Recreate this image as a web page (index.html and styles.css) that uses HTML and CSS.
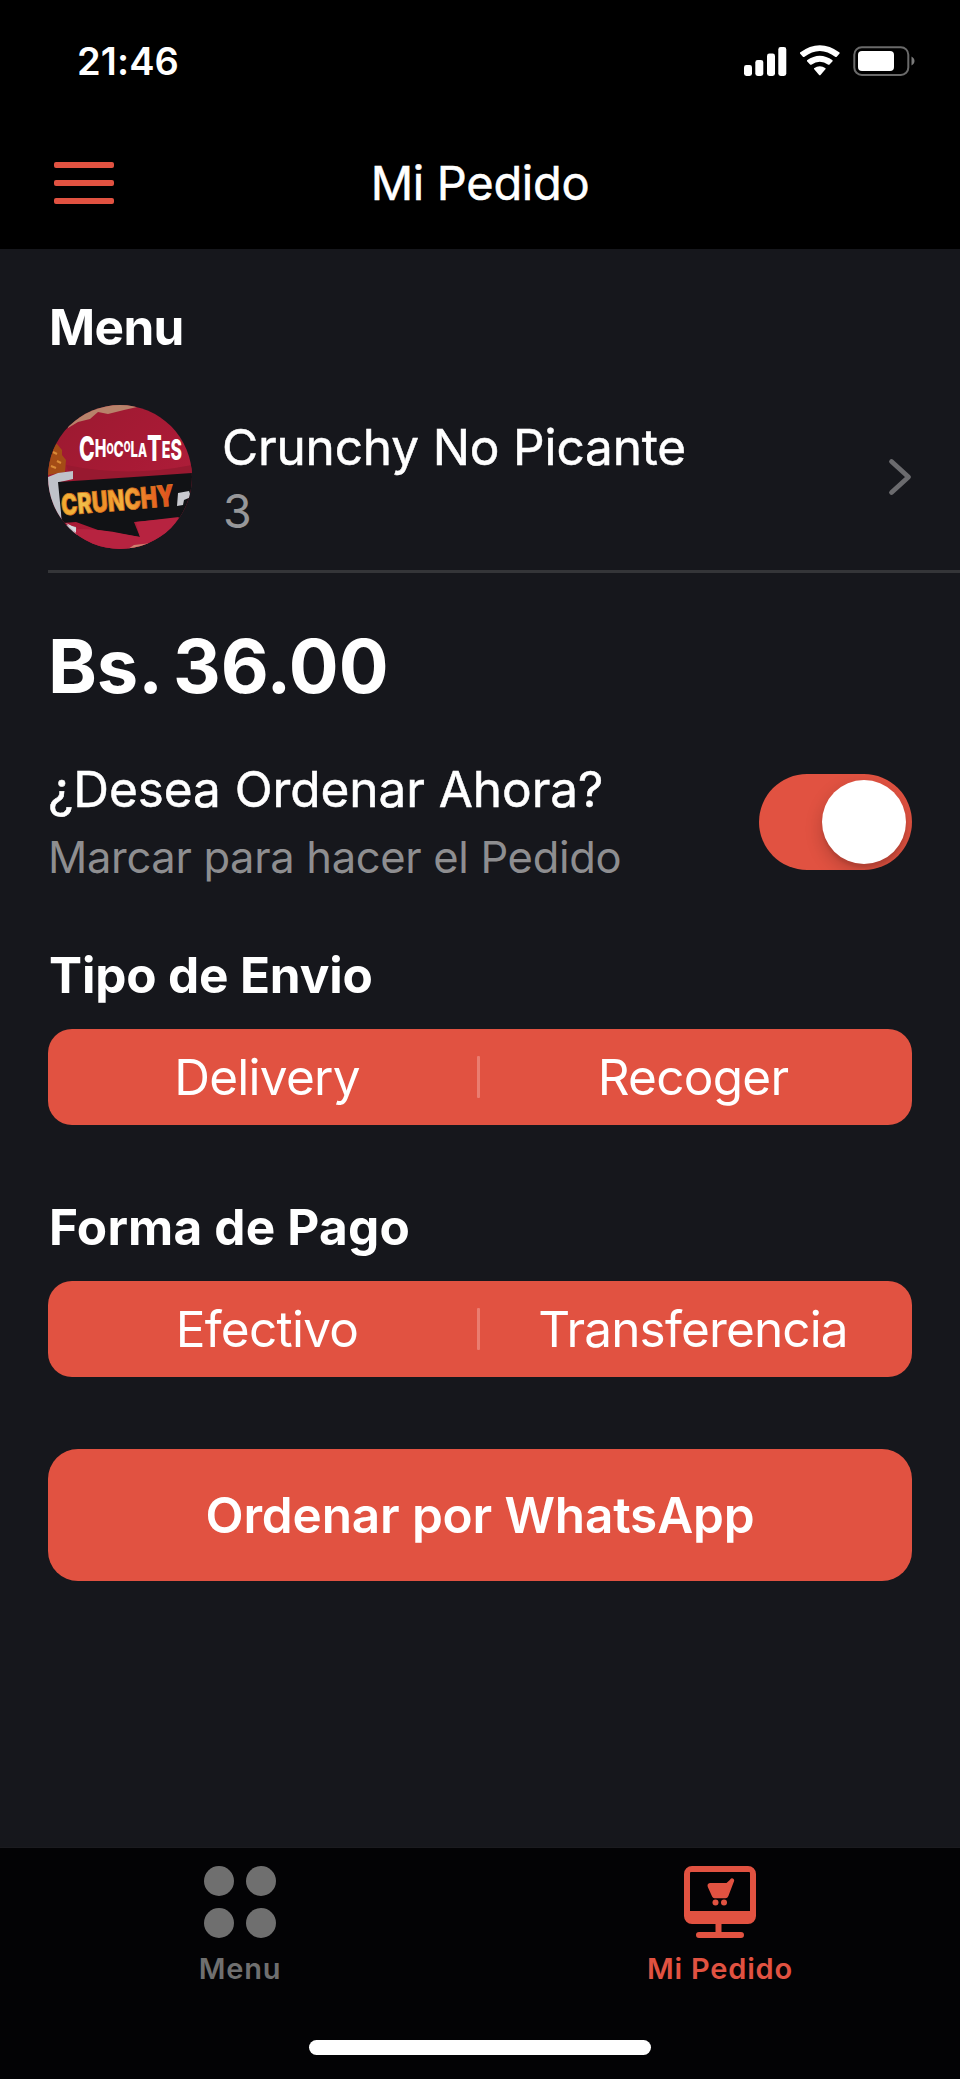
FILE: index.html
```html
<!DOCTYPE html>
<html lang="es">
<head>
<meta charset="utf-8">
<title>Mi Pedido</title>
<link rel="stylesheet" href="styles.css">
</head>
<body>
<div class="screen">
  <header class="top">
    <div class="status">
      <span class="time">21:46</span>
      <svg class="status-icons" viewBox="0 0 174 34" width="174" height="34">
        <g fill="#fff">
          <rect x="0" y="21" width="8" height="11" rx="2.4"/>
          <rect x="11.3" y="16" width="8" height="16" rx="2.4"/>
          <rect x="23" y="9.5" width="8" height="22.500" rx="2.400"/>
          <rect x="34.300" y="3" width="8" height="29" rx="2.400"/>
          <path d="M56 8.600Q75.800-6 95.600 8.600V9.600L92.500 13.100H91.500Q75.800 1 60.100 13.100H59.100L56 9.600Z"/>
          <path d="M63 16.200Q75.800 7.200 88.600 16.200V17.300L85.300 20.800H84.300Q75.800 14.500 67.300 20.800H66.300L63 17.300Z"/>
          <path d="M70 24.200Q75.800 20.200 81.600 24.200V25L76.300 31.200H75.300L70 25Z"/>
          <rect x="114" y="7" width="36" height="20" rx="4"/>
        </g>
        <rect x="110.300" y="3.200" width="54" height="27.800" rx="7.500" fill="none" stroke="#6a6a6a" stroke-width="2"/>
        <path d="M167.500 12.500C171.500 14.500 171.500 19.500 167.500 21.500Z" fill="#7a7a7a"/>
      </svg>
    </div>
    <div class="nav">
      <div class="burger"><i></i><i></i><i></i></div>
      <h1 class="title">Mi Pedido</h1>
    </div>
  </header>

  <main class="content">
    <h2 class="heading heading-menu">Menu</h2>
    <div class="item">
      <svg class="avatar" viewBox="0 0 144 144" width="144" height="144">
        <defs>
          <clipPath id="round"><circle cx="72" cy="72" r="72"/></clipPath>
          <linearGradient id="gold" x1="0" x2="1"><stop offset="0" stop-color="#f2a52b"/><stop offset=".2" stop-color="#f0c04a"/><stop offset=".35" stop-color="#ee8a24"/><stop offset=".55" stop-color="#f3b43e"/><stop offset=".8" stop-color="#ea6c22"/><stop offset="1" stop-color="#dc4a1e"/></linearGradient>
          <linearGradient id="red" x1="0" y1="0" x2="1" y2="1"><stop offset="0" stop-color="#9a1a30"/><stop offset=".5" stop-color="#a81a35"/><stop offset="1" stop-color="#b3213d"/></linearGradient>
        </defs>
        <g clip-path="url(#round)">
          <rect width="144" height="144" fill="url(#red)"/>
          <path d="M20 0H98L76 5 60 9 50 7 42 14 30 17 20 23Z" fill="#b8826a"/>
          <path d="M0 36L9 39 14 45 14 50 18 55 17 67 0 70Z" fill="#a44c16"/>
          <path d="M5 47l4 2M9 56l4 2M3 61l5 2" stroke="#d98a36" stroke-width="2"/>
          <path d="M18 60Q80 73 144 60V69L24 76Z" fill="#981930"/>
          <path d="M0 72L10 68 25 66 25 74 12 77 14 119 28 122 30 144H0Z" fill="#bfc2c9"/>
          <path d="M10 77L86 72 144 68V112L86 117 92 132 50 125 28 117 14 118Z" fill="#111215"/>
          <path d="M26 124Q54 124 76 129L92 132 88 117 131 112 110 144H30Z" fill="#b72340"/>
          <path d="M18 118L28 123V128Z" fill="#d6d8df"/>
          <path d="M80 144L86 140 104 138 98 144Z" fill="#ce836f"/>
          <text x="31" y="56" font-family="Inter, sans-serif" font-weight="800" fill="#fff" textLength="103" lengthAdjust="spacingAndGlyphs"><tspan font-size="34">C</tspan><tspan font-size="25" dy="-4">H</tspan><tspan font-size="15" dy="-3">O</tspan><tspan font-size="22" dy="3">C</tspan><tspan font-size="14" dy="-5">O</tspan><tspan font-size="21" dy="5">L</tspan><tspan font-size="19">A</tspan><tspan font-size="35" dy="4">T</tspan><tspan font-size="23" dy="-3">E</tspan><tspan font-size="28" dy="2">S</tspan></text>
          <text transform="rotate(-5 14 110)" x="14" y="110.500" font-family="Inter, sans-serif" font-weight="900" font-size="29" textLength="113" lengthAdjust="spacingAndGlyphs" fill="url(#gold)" stroke="#d87420" stroke-width=".8">CRUNCHY</text>
          <path d="M130 88L141 86 143 92 136 95 135 100 129 101Z" fill="#c9cad0"/>
        </g>
      </svg>
      <div class="item-text">
        <div class="item-name">Crunchy No Picante</div>
        <div class="item-qty">3</div>
      </div>
      <svg class="chevron" viewBox="0 0 24 38" width="24" height="38"><path d="M3.500 3.500L20.500 19 3.500 34.500" fill="none" stroke="#6b6b6e" stroke-width="4.800" stroke-linecap="round" stroke-linejoin="round"/></svg>
    </div>

    <div class="price">Bs. 36.00</div>

    <div class="ask">
      <div class="ask-text">
        <div class="ask-title">¿Desea Ordenar Ahora?</div>
        <div class="ask-sub">Marcar para hacer el Pedido</div>
      </div>
      <div class="toggle"><div class="knob"></div></div>
    </div>

    <h2 class="heading heading-ship">Tipo de Envio</h2>
    <div class="segmented">
      <span>Delivery</span><i class="divider"></i><span>Recoger</span>
    </div>

    <h2 class="heading heading-pay">Forma de Pago</h2>
    <div class="segmented">
      <span>Efectivo</span><i class="divider"></i><span class="long">Transferencia</span>
    </div>

    <div class="order">Ordenar por WhatsApp</div>
  </main>

  <footer class="bottom">
    <nav class="tabs">
      <div class="tab">
        <svg viewBox="0 0 72 72" width="72" height="72" fill="#6f6f6f"><circle cx="15" cy="15" r="15"/><circle cx="57" cy="15" r="15"/><circle cx="15" cy="57" r="15"/><circle cx="57" cy="57" r="15"/></svg>
        <span>Menu</span>
      </div>
      <div class="tab active">
        <svg viewBox="0 0 72 72" width="72" height="72" fill="#e15241">
          <path fill-rule="evenodd" d="M8 0H64A8 8 0 0 1 72 8V50A8 8 0 0 1 64 58H37.500V66H57A3 3 0 0 1 57 72H15A3 3 0 0 1 15 66H31.500V58H8A8 8 0 0 1 0 50V8A8 8 0 0 1 8 0ZM7 6A1 1 0 0 0 6 7V45H66V7A1 1 0 0 0 65 6Z"/>
          <path d="M26 17H42.500L45.800 14 46.500 13A2.200 2.200 0 0 1 50.200 14.800L44.400 30Q43.500 32.200 41.500 32.200H30.500Q28.800 32.200 28.100 30.500L23.800 21Q22.700 17.500 26 17Z"/>
          <circle cx="31.500" cy="36.500" r="3"/><circle cx="40" cy="36.500" r="3"/>
        </svg>
        <span>Mi Pedido</span>
      </div>
    </nav>
    <div class="home"></div>
  </footer>
</div>
</body>
</html>
```

FILE: styles.css
```css
* { box-sizing: border-box; margin: 0; padding: 0; }
body {
  background: #16171c;
  color: #fff;
  font-family: Inter, "Liberation Sans", sans-serif;
}
.screen {
  width: 960px;
  height: 2079px;
  display: flex;
  flex-direction: column;
  overflow: hidden;
}

/* Status bar and navigation */
.top { height: 249px; background: #000; flex: none; }
.status {
  height: 122px;
  padding: 0 42px 0 77px;
  display: flex;
  justify-content: space-between;
  align-items: center;
}
.time { font-size: 38px; font-weight: 600; letter-spacing: .1px; line-height: 60px; }
.nav {
  height: 122px;
  padding: 0 54px;
  display: grid;
  grid-template-columns: 60px 1fr 60px;
  align-items: center;
}
.burger { display: flex; flex-direction: column; gap: 12px; }
.burger i { height: 6px; border-radius: 2px; background: #e15241; }
.title { text-align: center; font-size: 47px; font-weight: 400; line-height: 60px; letter-spacing: -.3px; -webkit-text-stroke: .5px #fff; }

/* Order content */
.content { flex: 1; padding: 48px 48px 0; }
.heading { font-size: 49.5px; font-weight: 700; line-height: 60px; letter-spacing: -.15px; padding-left: 1px; }
.heading-menu { letter-spacing: -.6px; }
.item {
  height: 192px;
  margin: 24px -48px 0 0;
  padding: 24px 48px 21px 0;
  display: flex;
  align-items: center;
  border-bottom: 3px solid #343538;
}
.avatar { flex: none; display: block; }
.item-text { flex: 1; padding: 4px 0 0 30px; }
.item-name { font-size: 49.5px; line-height: 64px; letter-spacing: -.15px; -webkit-text-stroke: .5px #fff; }
.item-qty { font-size: 46.5px; line-height: 64px; color: #979799; padding-left: 1px; }
.price {
  margin-top: 48px;
  font-size: 74px;
  font-weight: 700;
  line-height: 90px;
  letter-spacing: -.1px;
  word-spacing: -5px;
}
.ask {
  height: 138px;
  margin-top: 42px;
  display: flex;
  justify-content: space-between;
}
.ask-title { font-size: 49.5px; line-height: 72px; letter-spacing: -.05px; -webkit-text-stroke: .5px #fff; }
.ask-sub { font-size: 43.5px; line-height: 65px; letter-spacing: -.33px; color: #8e8e90; }
.toggle {
  width: 153px;
  height: 96px;
  margin-top: 21px;
  padding: 6px;
  border-radius: 48px;
  background: #e15241;
  display: flex;
  justify-content: flex-end;
  overflow: hidden;
}
.knob {
  width: 84px;
  height: 84px;
  border-radius: 50%;
  background: #fff;
  box-shadow: 0 7px 18px rgba(0, 0, 0, .2), 0 4px 3px rgba(0, 0, 0, .08);
}
.heading-ship { margin-top: 54px; }
.segmented {
  height: 96px;
  margin-top: 24px;
  padding: 0 6px;
  border-radius: 24px;
  background: #e15241;
  display: flex;
  align-items: center;
}
.segmented span {
  flex: 1;
  text-align: center;
  font-size: 49.5px;
  line-height: 60px;
  letter-spacing: -.75px;
}
.segmented .long { letter-spacing: -.85px; }
.divider { width: 3px; height: 42px; margin: 0 0 0 -3px; background: #ea7d70; border-radius: 1px; }
.heading-pay { margin-top: 72px; letter-spacing: .2px; }
.order {
  height: 132px;
  margin-top: 72px;
  border-radius: 30px;
  background: #e15241;
  text-align: center;
  font-size: 49.5px;
  font-weight: 600;
  line-height: 132px;
  letter-spacing: -.15px;
}

/* Tab bar */
.bottom {
  height: 232px;
  background: #030305;
  border-top: 1px solid #1b1b1f;
  display: flex;
  flex-direction: column;
  justify-content: space-between;
  align-items: center;
  padding: 18px 0 24px;
  flex: none;
}
.tabs { width: 100%; display: grid; grid-template-columns: 1fr 1fr; }
.tab {
  display: flex;
  flex-direction: column;
  align-items: center;
  gap: 10px;
  color: #6f6f6f;
  font-size: 29px;
  font-weight: 600;
  line-height: 41px;
  letter-spacing: .8px;
}
.tab svg { display: block; }
.active { color: #e15241; }
.home { width: 342px; height: 15px; border-radius: 8px; background: #fff; }
```
